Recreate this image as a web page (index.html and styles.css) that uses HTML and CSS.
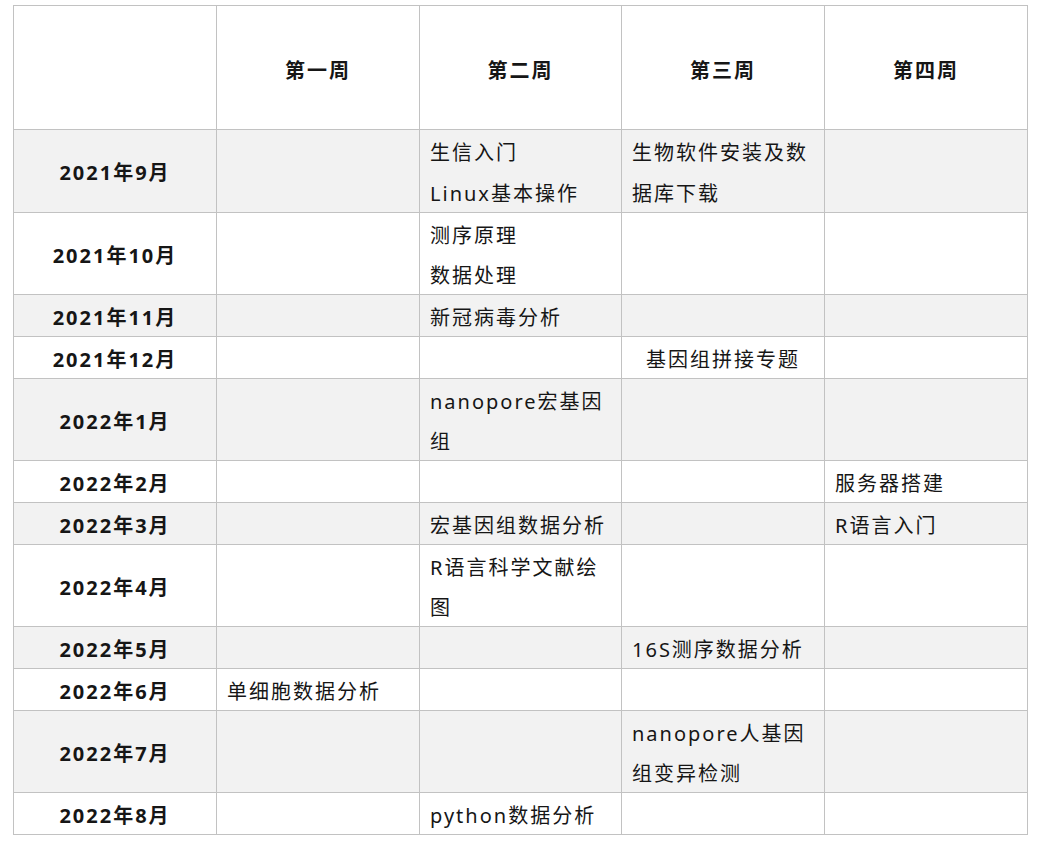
FILE: index.html
```html
<!DOCTYPE html>
<html lang="zh-CN">
<head>
<meta charset="utf-8">
<title>课程安排</title>
<link rel="stylesheet" href="styles.css">
</head>
<body>
<table class="plan">
  <colgroup>
    <col class="c"><col class="c"><col class="c narrow"><col class="c"><col class="c">
  </colgroup>
  <thead>
    <tr class="head">
      <th></th>
      <th>第一周</th>
      <th>第二周</th>
      <th>第三周</th>
      <th>第四周</th>
    </tr>
  </thead>
  <tbody>
    <tr class="alt">
      <th class="month"><div class="t">2021年9月</div></th>
      <td></td>
      <td><div class="t">生信入门<br>Linux基本操作</div></td>
      <td><div class="t">生物软件安装及数据库下载</div></td>
      <td></td>
    </tr>
    <tr>
      <th class="month"><div class="t">2021年10月</div></th>
      <td></td>
      <td><div class="t">测序原理<br>数据处理</div></td>
      <td></td>
      <td></td>
    </tr>
    <tr class="alt">
      <th class="month"><div class="t">2021年11月</div></th>
      <td></td>
      <td><div class="t">新冠病毒分析</div></td>
      <td></td>
      <td></td>
    </tr>
    <tr>
      <th class="month"><div class="t">2021年12月</div></th>
      <td></td>
      <td></td>
      <td class="center"><div class="t">基因组拼接专题</div></td>
      <td></td>
    </tr>
    <tr class="alt">
      <th class="month"><div class="t">2022年1月</div></th>
      <td></td>
      <td><div class="t">nanopore宏基因组</div></td>
      <td></td>
      <td></td>
    </tr>
    <tr>
      <th class="month"><div class="t">2022年2月</div></th>
      <td></td>
      <td></td>
      <td></td>
      <td><div class="t">服务器搭建</div></td>
    </tr>
    <tr class="alt">
      <th class="month"><div class="t">2022年3月</div></th>
      <td></td>
      <td><div class="t">宏基因组数据分析</div></td>
      <td></td>
      <td><div class="t">R语言入门</div></td>
    </tr>
    <tr>
      <th class="month"><div class="t">2022年4月</div></th>
      <td></td>
      <td><div class="t">R语言科学文献绘图</div></td>
      <td></td>
      <td></td>
    </tr>
    <tr class="alt">
      <th class="month"><div class="t">2022年5月</div></th>
      <td></td>
      <td></td>
      <td><div class="t">16S测序数据分析</div></td>
      <td></td>
    </tr>
    <tr>
      <th class="month"><div class="t">2022年6月</div></th>
      <td><div class="t">单细胞数据分析</div></td>
      <td></td>
      <td></td>
      <td></td>
    </tr>
    <tr class="alt">
      <th class="month"><div class="t">2022年7月</div></th>
      <td></td>
      <td></td>
      <td><div class="t">nanopore人基因组变异检测</div></td>
      <td></td>
    </tr>
    <tr>
      <th class="month"><div class="t">2022年8月</div></th>
      <td></td>
      <td><div class="t">python数据分析</div></td>
      <td></td>
      <td></td>
    </tr>
  </tbody>
</table>
</body>
</html>
```
FILE: styles.css
```css
html, body {
  margin: 0;
  padding: 0;
  background: #ffffff;
}

body {
  padding: 5px 0 0 13px;
  font-family: "Noto Sans", "Noto Sans CJK SC", sans-serif;
  color: #161616;
}

.plan {
  border-collapse: collapse;
  table-layout: fixed;
  width: 1014px;
  font-size: 20px;
  letter-spacing: 2px;
  line-height: 40.75px;
}

.plan .c {
  width: 203px;
}

.plan .c.narrow {
  width: 202px;
}

.plan th,
.plan td {
  border: 1px solid #c2c2c2;
  padding: 0 10px;
  vertical-align: middle;
  text-align: left;
  word-break: break-all;
}

.plan .t {
  padding-top: 3px;
  margin-bottom: -3px;
}

.plan .head th {
  height: 116px;
  padding-top: 7px;
  text-align: center;
  font-weight: 700;
}

.plan th.month {
  text-align: center;
  font-weight: 700;
}

.plan td.center {
  text-align: center;
}

.plan tr.alt {
  background: #f2f2f2;
}
```
